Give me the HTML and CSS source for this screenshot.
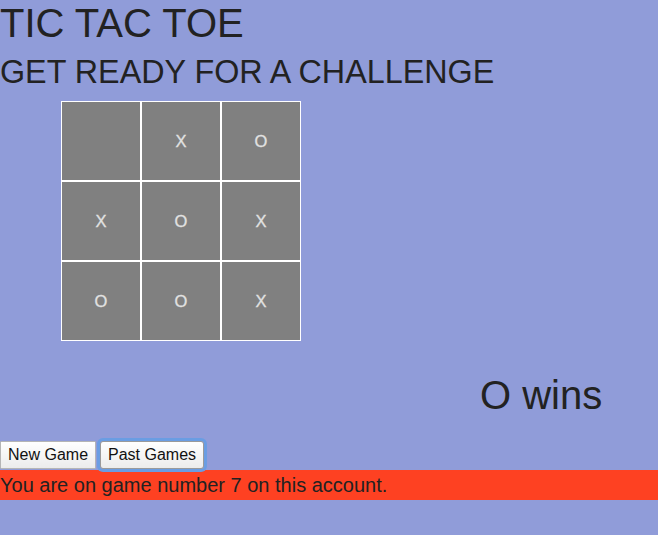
FILE: index.html
```html
<!DOCTYPE html>
<html>
<head>
<meta charset="utf-8">
<link rel="stylesheet" href="styles.css">
</head>
<body>
<h1 class="title">TIC TAC TOE</h1>
<h2 class="subtitle">GET READY FOR A CHALLENGE</h2>
<div class="board">
  <div class="cell"></div>
  <div class="cell">X</div>
  <div class="cell">O</div>
  <div class="cell">X</div>
  <div class="cell">O</div>
  <div class="cell">X</div>
  <div class="cell">O</div>
  <div class="cell">O</div>
  <div class="cell">X</div>
</div>
<div class="status">O wins</div>
<div class="controls">
  <button class="btn">New Game</button>
  <button class="btn focused">Past Games</button>
</div>
<div class="info">You are on game number 7 on this account.</div>
</body>
</html>
```
FILE: styles.css
```css
html, body {
  margin: 0;
  padding: 0;
  background: #909cd9;
  font-family: "Liberation Sans", Arial, sans-serif;
  color: #222;
}
.title {
  margin: 0;
  font-size: 40px;
  font-weight: normal;
  line-height: 46px;
}
.subtitle {
  margin: 8px 0 0 0;
  font-size: 32.3px;
  font-weight: normal;
  line-height: 37px;
}
.board {
  margin: 10px 0 0 61px;
  display: grid;
  grid-template-columns: repeat(3, 80px);
  grid-template-rows: repeat(3, 80px);
  width: 240px;
}
.cell {
  box-sizing: border-box;
  border: 1px solid #fff;
  background: #808080;
  color: #e2e2e2;
  font-size: 16.5px;
  display: flex;
  align-items: center;
  justify-content: center;
  -webkit-text-stroke: 0.3px #e2e2e2;
}
.status {
  margin-top: 31px;
  padding-left: 480px;
  font-size: 40px;
  line-height: 46px;
}
.controls {
  margin-top: 23px;
  display: flex;
  gap: 4px;
  height: 28px;
}
.btn {
  box-sizing: border-box;
  height: 28px;
  margin: 0;
  padding: 0 7px;
  font-family: "Liberation Sans", Arial, sans-serif;
  font-size: 16px;
  color: #111;
  border: 1px solid #b5b5b5;
  border-radius: 1px;
  background: linear-gradient(#ffffff, #ececec);
}
.focused {
  border-color: #9a9a9a;
  box-shadow: 0 0 0 3px #6a9de3;
  border-radius: 3px;
}
.info {
  margin-top: 1px;
  background: #fe4122;
  font-size: 20px;
  line-height: 30px;
  height: 30px;
  color: #222;
}
```
